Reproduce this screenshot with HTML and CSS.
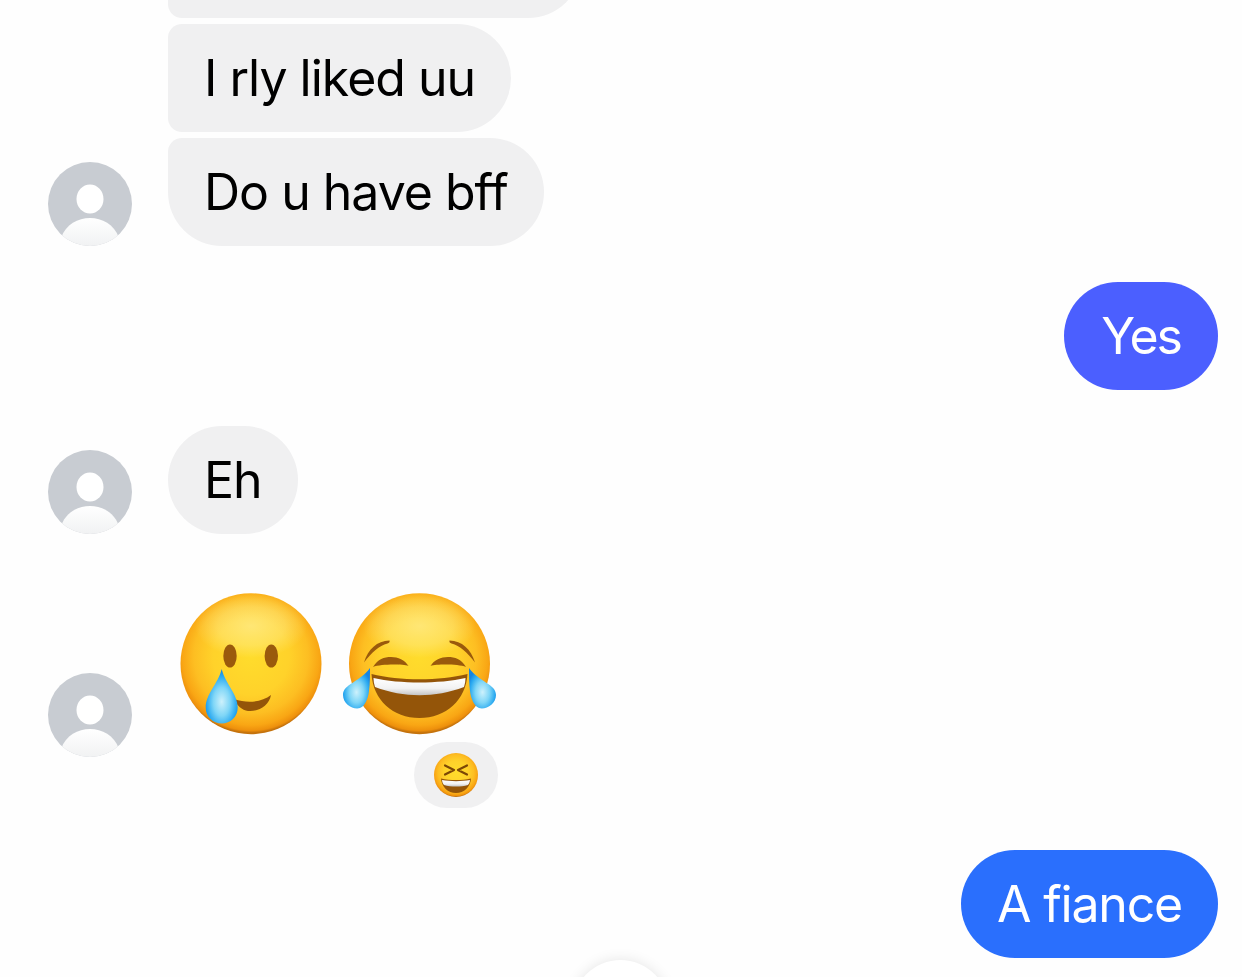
FILE: index.html
```html
<!DOCTYPE html>
<html lang="en">
<head>
  <meta charset="UTF-8" />
  <meta name="viewport" content="width=device-width, initial-scale=1.0"/>
  <title>Messages</title>
  <link rel="stylesheet" href="styles.css">
</head>
<body>
  <!-- shared gradients and the avatar -->
  <svg class="sprite" aria-hidden="true">
    <defs>
      <radialGradient id="face" cx="50%" cy="45%" r="54%">
        <stop offset="0" stop-color="#ffdc2c"/>
        <stop offset="0.5" stop-color="#ffd22a"/>
        <stop offset="0.75" stop-color="#fdbe22"/>
        <stop offset="0.9" stop-color="#f9a614"/>
        <stop offset="0.97" stop-color="#ee900c"/>
        <stop offset="1" stop-color="#c4720c"/>
      </radialGradient>
      <radialGradient id="shine" cx="50%" cy="50%" r="50%">
        <stop offset="0" stop-color="#fff3a6" stop-opacity="0.6"/>
        <stop offset="0.6" stop-color="#fff3a6" stop-opacity="0.35"/>
        <stop offset="1" stop-color="#fff3a6" stop-opacity="0"/>
      </radialGradient>
      <radialGradient id="tear" cx="50%" cy="60%" r="58%">
        <stop offset="0" stop-color="#cdf1fc"/>
        <stop offset="0.45" stop-color="#7fd6f7"/>
        <stop offset="0.8" stop-color="#2aa9f0"/>
        <stop offset="1" stop-color="#1784e0"/>
      </radialGradient>
      <linearGradient id="teeth" x1="0" y1="0" x2="0" y2="1">
        <stop offset="0" stop-color="#fff"/>
        <stop offset="0.6" stop-color="#f2f2f2"/>
        <stop offset="1" stop-color="#c4c4c4"/>
      </linearGradient>
      <linearGradient id="shoulder" x1="0" y1="0" x2="0" y2="1">
        <stop offset="0" stop-color="#fff"/>
        <stop offset="1" stop-color="#f1f2f3"/>
      </linearGradient>
      <clipPath id="avatar-clip"><circle cx="42" cy="42" r="42"/></clipPath>
      <symbol id="avatar" viewBox="0 0 84 84">
        <circle cx="42" cy="42" r="42" fill="#c8ccd2"/>
        <ellipse cx="42" cy="37" rx="13.5" ry="14.5" fill="#fff"/>
        <g clip-path="url(#avatar-clip)">
          <path d="M13 76 C18 62 30 56 42 56 C54 56 66 62 71 76 L71 84 L13 84 Z" fill="url(#shoulder)"/>
        </g>
      </symbol>
    </defs>
  </svg>

  <div class="chat">
    <div class="row">
      <div class="spacer"></div>
      <div class="bubble first-top"></div>
    </div>
    <div class="row grouped">
      <div class="spacer"></div>
      <div class="bubble middle">I rly liked uu</div>
    </div>
    <div class="row grouped">
      <svg class="avatar"><use href="#avatar"/></svg>
      <div class="bubble last">Do u have bff</div>
    </div>

    <div class="row mine">
      <div class="bubble sent-violet">Yes</div>
    </div>

    <div class="row">
      <svg class="avatar"><use href="#avatar"/></svg>
      <div class="bubble">Eh</div>
    </div>

    <div class="row emoji-row">
      <svg class="avatar avatar-raised"><use href="#avatar"/></svg>
      <div class="emoji-group">
        <div class="emoji-line">
          <!-- smiling face with tear -->
          <svg class="emoji" viewBox="0 0 160 158">
            <circle cx="79" cy="79.7" r="70.5" fill="url(#face)"/>
            <ellipse cx="79" cy="42" rx="56" ry="32" fill="url(#shine)"/>
            <ellipse cx="58" cy="72" rx="6.7" ry="11.5" fill="#9a5a0c"/>
            <ellipse cx="99.3" cy="72" rx="6.7" ry="11.5" fill="#9a5a0c"/>
            <path d="M62 115 C76 120 90 118 99 111 C97 122 86 128 76 127 C70 126 65 122 62 115 Z" fill="#945509"/>
            <path d="M49.7 85 C46 100 33.7 110 33.7 123.5 C33.7 133 41 139.5 49.7 139.5 C58.4 139.5 65.7 133 65.7 123.5 C65.7 110 53.4 100 49.7 85 Z" fill="url(#tear)"/>
          </svg>
          <!-- face with tears of joy -->
          <svg class="emoji" viewBox="0 0 160 158">
            <circle cx="79.5" cy="79.7" r="70.5" fill="url(#face)"/>
            <ellipse cx="79.5" cy="42" rx="56" ry="32" fill="url(#shine)"/>
            <path d="M24 78.5 C28 65 37 57 49.5 56.5 C50 58 49 59 47.5 59.5 C39 62 32 68 24 78.5 Z" fill="#9a5a0c"/>
            <path d="M135 78.5 C131 65 122 57 109.5 56.5 C109 58 110 59 111.5 59.5 C120 62 127 68 135 78.5 Z" fill="#9a5a0c"/>
            <path d="M33 83 C38 75 44 73 51 73 C58 73 65 76 68.5 82 C62 80 41 80 33 83 Z" fill="#9a5a0c"/>
            <path d="M126 83 C121 75 115 73 108 73 C101 73 94 76 90.5 82 C97 80 118 80 126 83 Z" fill="#9a5a0c"/>
            <path d="M31.5 90 C60 97 99 97 127.5 90 C126 116 106 134 79.5 134 C53 134 33 116 31.5 90 Z" fill="#945509"/>
            <path d="M33.5 94 C60 100 99 100 125.5 94 C125.5 97 125 100 124 103 C95 114 64 114 35 103 C34 100 33.5 97 33.5 94 Z" fill="url(#teeth)"/>
            <path d="M30 84 C20 98 3 100 3 111 C3 120 13 126 20 124 C25 122 28 115 29 107 C30 100 30 91 30 84 Z" fill="url(#tear)"/>
            <path d="M129 84 C139 98 156 100 156 111 C156 120 146 126 139 124 C134 122 131 115 130 107 C129 100 129 91 129 84 Z" fill="url(#tear)"/>
          </svg>
        </div>
        <div class="reaction">
          <!-- grinning squinting face -->
          <svg class="reaction-emoji" viewBox="0 0 48 48">
            <circle cx="24" cy="24" r="22" fill="url(#face)"/>
            <path d="M13 14.5 L22 19 L13 23.5 M35 14.5 L26 19 L35 23.5" fill="none" stroke="#7c4706" stroke-width="2.2" stroke-linecap="round" stroke-linejoin="round"/>
            <path d="M9 27.5 C18 29.5 30 29.5 39 27.5 C38.5 36 32 42 24 42 C16 42 9.5 36 9 27.5 Z" fill="#945509"/>
            <path d="M10 29 C18 30.5 30 30.5 38 29 C37.8 31 37 33 36 34 C29 36 19 36 12 34 C11 33 10.2 31 10 29 Z" fill="url(#teeth)"/>
          </svg>
        </div>
      </div>
    </div>

    <div class="row mine last-row">
      <div class="bubble sent-blue">A fiance</div>
    </div>
  </div>

  <div class="scroll-button"></div>
</body>
</html>
```

FILE: styles.css
```css
* {
  box-sizing: border-box;
}
html, body {
  height: 100%;
}
body {
  font-family: Inter, "Liberation Sans", sans-serif;
  background: #fefefe;
  color: #000;
  margin: 0;
  overflow: hidden;
  position: relative;
}
.sprite {
  display: block;
  width: 0;
  height: 0;
}
.chat {
  display: flex;
  flex-direction: column;
  gap: 36px;
  margin-top: -90px;
  padding: 0 24px 0 48px;
}
.row {
  display: flex;
  align-items: flex-end;
  gap: 36px;
}
.row.grouped {
  margin-top: -30px;
}
.row.mine {
  justify-content: flex-end;
}
.spacer,
.avatar {
  width: 84px;
  height: 84px;
  flex: none;
}
.avatar-raised {
  margin-bottom: 51px;
}
.bubble {
  height: 108px;
  padding: 0 36px;
  border-radius: 54px;
  background: #f0f0f1;
  font-size: 50px;
  font-variant-ligatures: none;
  letter-spacing: -1px;
  line-height: 108px;
  white-space: nowrap;
}
.first-top {
  width: 414px;
  border-radius: 14px 54px 54px 14px;
}
.middle {
  border-radius: 14px 54px 54px 14px;
}
.last {
  border-radius: 14px 54px 54px 54px;
}
.sent-violet {
  background: #4b5fff;
  color: #fff;
  letter-spacing: -2px;
  padding: 0 37px;
}
.sent-blue {
  background: #2a6ffd;
  color: #fff;
  letter-spacing: -1.2px;
}
.emoji-row {
  margin-top: 14px;
}
.last-row {
  margin-top: 6px;
}
.emoji-group {
  display: flex;
  flex-direction: column;
  align-items: flex-end;
  margin-left: 4px;
}
.emoji-line {
  display: flex;
  gap: 8px;
}
.emoji {
  width: 160px;
  height: 158px;
  display: block;
}
.reaction {
  display: flex;
  align-items: center;
  justify-content: center;
  width: 84px;
  height: 66px;
  margin-right: 2px;
  border-radius: 33px;
  background: #f0f0f1;
}
.reaction-emoji {
  width: 48px;
  height: 48px;
  display: block;
}
.scroll-button {
  position: absolute;
  left: 572px;
  top: 960px;
  width: 97px;
  height: 97px;
  border-radius: 50%;
  background: #fff;
  box-shadow: 0 0 14px rgba(0,0,0,0.1);
}
```
